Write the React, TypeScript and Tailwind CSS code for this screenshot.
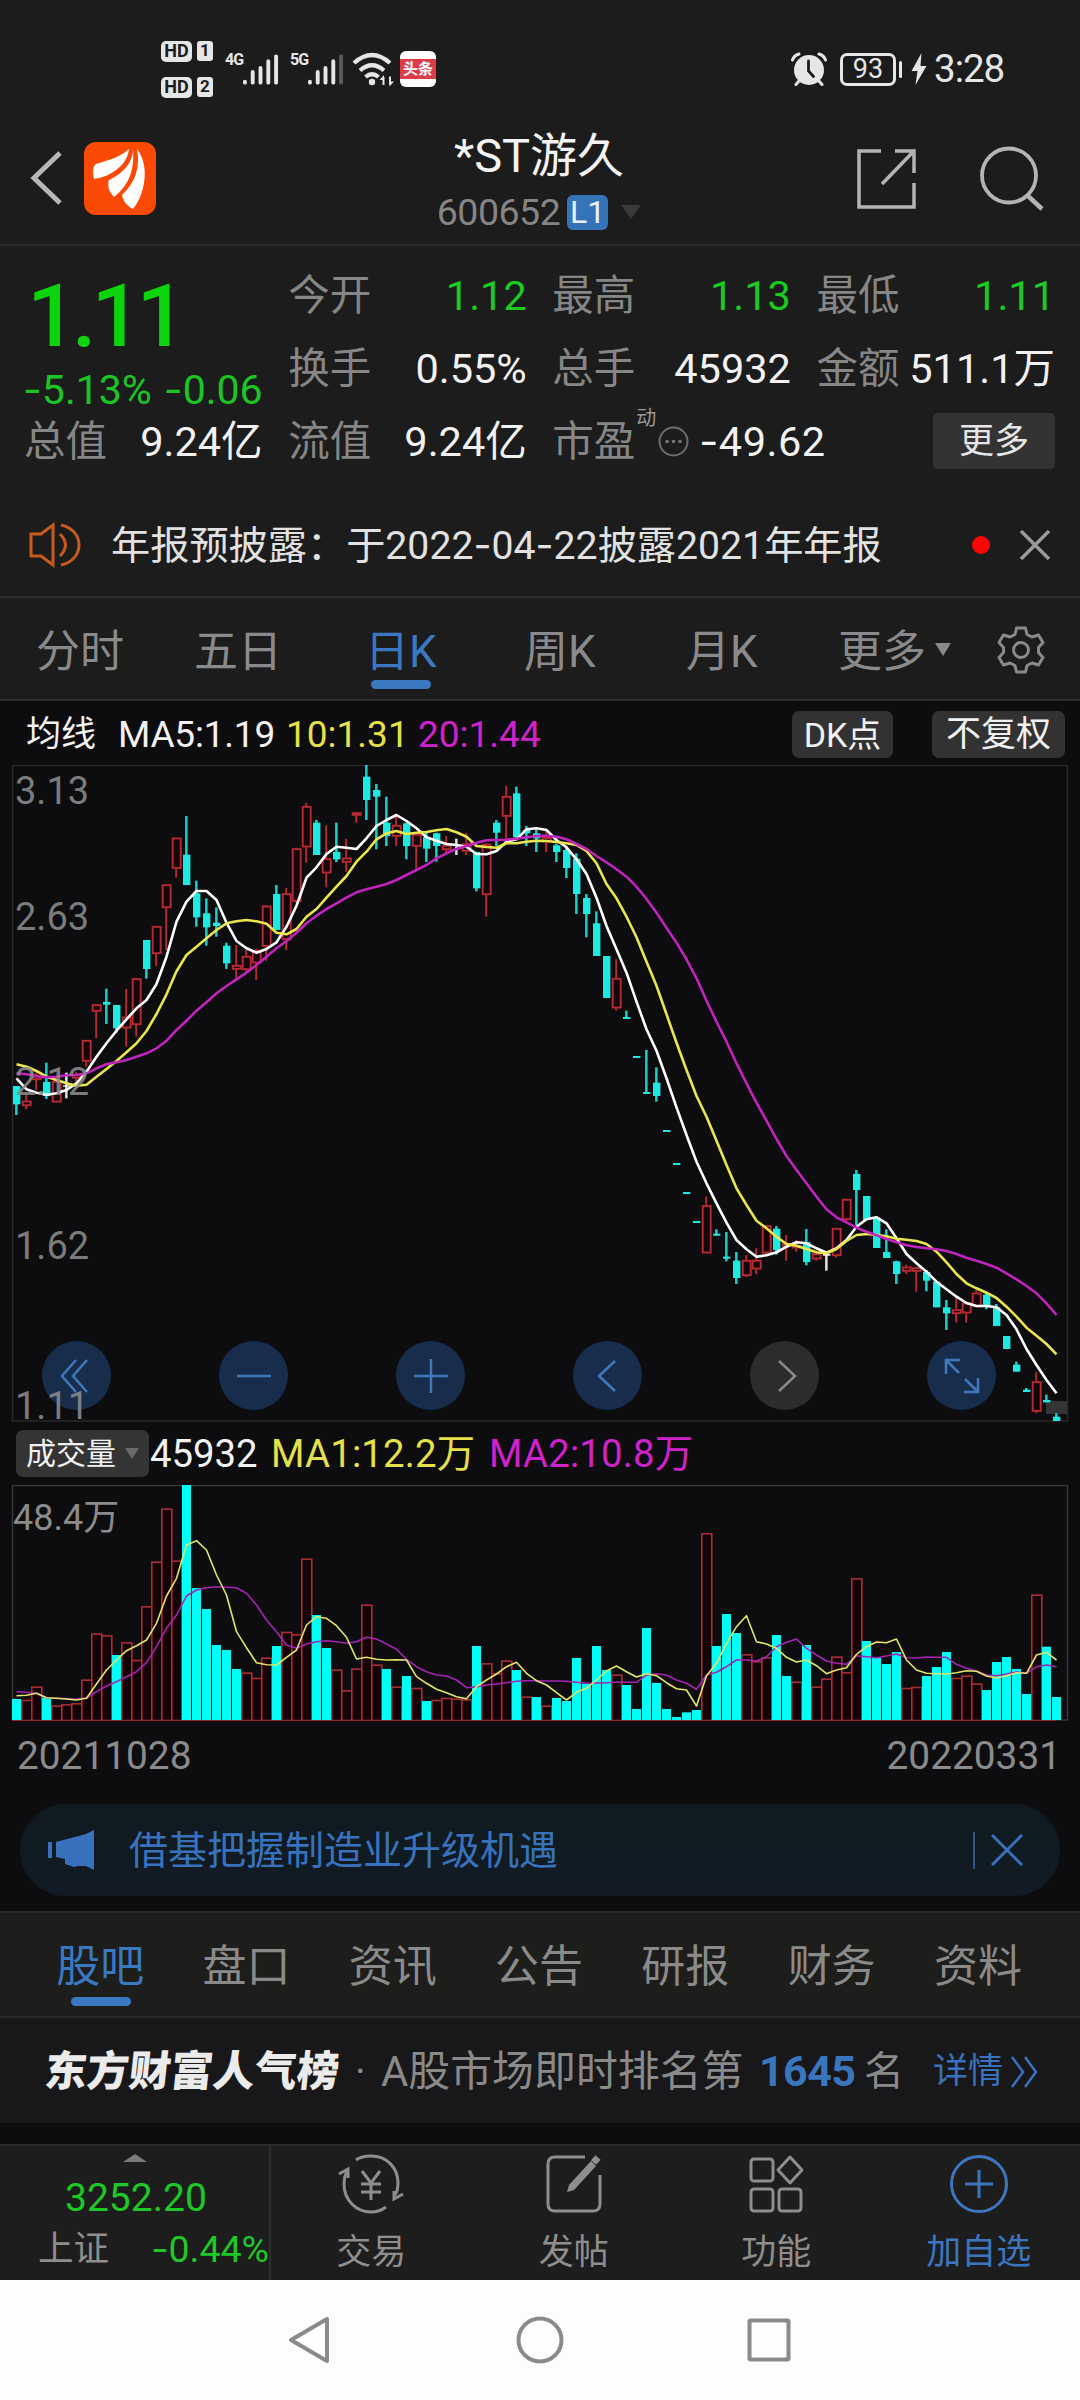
import React from "react";

const FONT = "font-['Roboto','Noto_Sans_CJK_SC',sans-serif]";

type Candle = [kind: "u" | "d" | "x", high: number, top: number, bottom: number, low: number];

/* Vertical chart units are thirds of a pixel; the second half starts lower by LATE units. */
const LATE = 1050;

const CANDLES_EARLY: Candle[] = [
  ["d", 1008, 1008, 1063, 1095], ["u", 1035, 1052, 1068, 1078], ["u", 970, 978, 990, 1020],
  ["d", 938, 996, 1038, 1047], ["u", 990, 993, 1057, 1058], ["x", 968, 1006, 1010, 1045],
  ["u", 965, 972, 985, 1000], ["u", 870, 870, 935, 950], ["u", 763, 763, 785, 865],
  ["d", 716, 756, 764, 822], ["d", 765, 765, 835, 848], ["u", 717, 800, 835, 890],
  ["u", 685, 685, 825, 860], ["d", 570, 570, 657, 686], ["u", 528, 528, 612, 648],
  ["u", 403, 403, 474, 600], ["u", 263, 263, 356, 383], ["d", 198, 314, 405, 405],
  ["d", 392, 430, 502, 530], ["d", 445, 490, 532, 587], ["d", 472, 518, 528, 560],
  ["d", 578, 587, 640, 657], ["u", 585, 645, 659, 686], ["u", 600, 618, 660, 665],
  ["u", 598, 600, 640, 690], ["u", 465, 467, 590, 632], ["d", 405, 432, 540, 540],
  ["u", 413, 430, 570, 600], ["u", 293, 295, 455, 458], ["u", 158, 168, 292, 338],
  ["d", 210, 218, 315, 315], ["u", 226, 325, 370, 412], ["d", 218, 306, 328, 336],
  ["u", 266, 323, 338, 365], ["u", 185, 187, 197, 218], ["d", 45, 80, 150, 210],
  ["d", 102, 120, 140, 298], ["d", 140, 218, 258, 288], ["u", 195, 225, 260, 288],
  ["d", 218, 220, 288, 328], ["u", 250, 252, 290, 362], ["d", 245, 262, 296, 336],
  ["d", 248, 250, 288, 335], ["u", 258, 285, 300, 308], ["x", 266, 284, 288, 315],
  ["u", 248, 280, 305, 315], ["d", 305, 306, 415, 424], ["u", 280, 282, 435, 500],
  ["d", 210, 218, 248, 288], ["u", 108, 138, 200, 275], ["d", 110, 130, 262, 265],
  ["d", 228, 240, 250, 288], ["d", 240, 250, 265, 306], ["u", 235, 262, 276, 306],
  ["d", 282, 286, 306, 336], ["d", 290, 300, 354, 384], ["d", 310, 326, 432, 492],
  ["d", 432, 444, 492, 562], ["d", 484, 520, 618, 618], ["d", 618, 618, 744, 744],
  ["u", 628, 684, 775, 782], ["d", 782, 801, 807, 807], ["d", 918, 918, 924, 924],
  ["d", 900, 1026, 1032, 1032], ["d", 952, 998, 1038, 1055], ["d", 1140, 1140, 1146, 1146],
  ["d", 1239, 1239, 1245, 1245], ["d", 1326, 1326, 1332, 1332], ["d", 1413, 1413, 1419, 1419],
];

const CANDLES_LATE: Candle[] = [
  ["u", 290, 316, 460, 460], ["d", 388, 401, 407, 407], ["d", 396, 470, 476, 484],
  ["d", 456, 482, 534, 552], ["u", 465, 480, 528, 532], ["u", 445, 480, 508, 523],
  ["u", 375, 376, 460, 465], ["d", 378, 386, 450, 464], ["u", 405, 430, 440, 482],
  ["u", 420, 435, 445, 455], ["d", 387, 426, 486, 496], ["u", 455, 460, 478, 482],
  ["x", 455, 462, 467, 512], ["u", 384, 384, 468, 473], ["u", 296, 297, 360, 362],
  ["d", 210, 222, 270, 375], ["d", 288, 288, 360, 360], ["d", 348, 352, 444, 444],
  ["d", 388, 456, 474, 474], ["d", 482, 484, 522, 552], ["u", 494, 500, 515, 522],
  ["u", 500, 502, 515, 575], ["d", 510, 516, 542, 574], ["d", 543, 545, 622, 622],
  ["d", 600, 622, 640, 690], ["u", 590, 628, 642, 668], ["u", 605, 608, 640, 668],
  ["u", 570, 578, 620, 622], ["d", 578, 584, 618, 628], ["d", 612, 622, 678, 678],
  ["d", 708, 708, 747, 747], ["d", 785, 794, 815, 815], ["d", 864, 869, 876, 876],
  ["u", 816, 844, 935, 940], ["d", 884, 900, 907, 907], ["d", 940, 950, 963, 963],
];

const CANDLES: Candle[] = [
  ...CANDLES_EARLY,
  ...CANDLES_LATE.map(([k, a, b, c, d]): Candle => [k, a + LATE, b + LATE, c + LATE, d + LATE]),
];

const late = (values: number[]) => values.map((v) => v + LATE);

const MA5 = [
  985, 1018, 1028, 1034, 1030, 1020, 1000, 965, 920, 880, 842, 808, 775, 750, 702, 620, 515, 455, 423, 423,
  450, 518, 573, 595, 608, 597, 577, 530, 467, 383, 352, 312, 290, 293, 297, 265, 228, 210, 195, 213,
  235, 262, 272, 282, 285, 290, 312, 313, 303, 275, 268, 238, 235, 240, 270, 292, 328, 372, 443, 528,
  598, 668, 755, 838, 902, 985, 1072, 1155, 1235, 1300, 1360, 1418, 1470, 1498,
  ...late([
    470, 466, 457, 440, 427, 430, 445, 458, 445, 420, 380, 358, 352, 370, 415, 462, 490, 515, 545, 568, 590,
    609, 618, 618, 622, 645, 688, 747, 795, 840, 880,
  ]),
];

const MA10 = [
  943, 950, 963, 980, 990, 1000, 1007, 1004, 980, 957, 933, 907, 880, 843, 792, 733, 664, 615, 590, 565,
  540, 520, 514, 510, 514, 521, 548, 553, 537, 500, 477, 443, 410, 378, 335, 305, 268, 250, 243, 252,
  248, 246, 241, 237, 247, 260, 288, 291, 293, 280, 280, 275, 272, 273, 276, 280, 285, 303, 340, 402,
  445, 500, 562, 635, 707, 793, 878, 960, 1038, 1100, 1172, 1245, 1315, 1365,
  ...late([
    362, 385, 410, 432, 437, 447, 457, 460, 447, 423, 405, 402, 405, 409, 416, 419, 423, 432, 455, 487, 522,
    550, 565, 578, 594, 620, 650, 683, 707, 732, 763,
  ]),
];

const MA20 = [
  970, 973, 978, 982, 980, 976, 975, 970, 955, 943, 937, 930, 920, 910, 895, 872, 840, 812, 782, 757,
  730, 708, 688, 668, 645, 620, 595, 573, 548, 520, 497, 477, 460, 443, 427, 418, 410, 402, 390, 375,
  360, 345, 325, 310, 297, 288, 278, 271, 270, 269, 266, 262, 258, 257, 260, 268, 282, 297, 318, 337,
  358, 380, 410, 447, 488, 533, 578, 628, 685, 752, 815, 875, 940, 1000,
  ...late([
    8, 62, 117, 168, 210, 250, 290, 328, 352, 367, 383, 395, 406, 417, 427, 436, 441, 445, 448, 453, 462,
    473, 482, 492, 503, 520, 538, 558, 580, 610, 645,
  ]),
];

/* Positive: hollow red bar, negative: solid cyan bar. */
const VOLUME = [
  -63, 60, 100, -67, 43, 47, 50, 121, 259, 254, -195, 233, 180, 341, 475, 634, 478, -705, -396, -333,
  -225, -210, -153, 142, 126, 187, -222, 264, 257, 484, -315, -216, 151, 89, 154, 346, 166, -153, 100, -132,
  96, -57, 60, 66, 64, 62, -222, 170, 140, 178, -150, 70, -69, 43, -66, -57, -186, -109, -222, -150,
  136, -105, -33, -276, -111, -33, -9, -23, -30, 560, -222, -318, -261, 197, 176, 188, -255, -132, 115, -225,
  100, 124, 190, 143, 425, -237, -187, -168, -204, 96, 99, -132, -159, -204, 126, 133, 109, -90, -174, -189,
  -153, -78, 376, -220, -69,
];

const VOL_MA1 = [
  677, 676, 670, 683, 685, 687, 690, 685, 642, 600, 570, 542, 527, 510, 460, 378, 325, 225, 212, 240,
  315, 375, 485, 533, 578, 584, 585, 562, 540, 465, 440, 445, 467, 502, 567, 562, 568, 570, 569, 570,
  620, 640, 658, 668, 680, 686, 650, 630, 612, 590, 577, 610, 632, 645, 668, 690, 667, 655, 630, 603,
  588, 605, 621, 611, 617, 638, 656, 660, 708, 617, 580, 520, 470, 437, 515, 522, 535, 562, 576, 570,
  587, 611, 600, 593, 553, 530, 516, 518, 507, 570, 600, 610, 611, 612, 608, 602, 604, 618, 624, 617,
  608, 610, 555, 547, 570,
];

const VOL_MA2 = [
  665, 667, 670, 684, 685, 686, 687, 684, 665, 648, 635, 620, 605, 578, 530, 475, 435, 378, 360, 353,
  350, 352, 353, 370, 405, 450, 485, 525, 535, 522, 515, 512, 515, 520, 515, 502, 507, 522, 538, 568,
  590, 605, 615, 618, 630, 653, 650, 645, 642, 638, 634, 632, 632, 633, 633, 634, 637, 640, 639, 638,
  637, 637, 637, 615, 611, 615, 630, 640, 658, 615, 607, 590, 570, 570, 573, 560, 530, 517, 507, 535,
  555, 573, 580, 583, 557, 560, 563, 558, 552, 563, 564, 561, 562, 562, 583, 595, 603, 615, 617, 612,
  606, 610, 590, 585, 590,
];

const cx = (i: number) => 16.5 + 10 * i;
const line = (values: number[]) =>
  values.map((v, i) => `${cx(i)},${(v / 3 - 15).toFixed(1)}`).join(" ");

function Num({ children, className = "" }: { children: string; className?: string }) {
  return (
    <span className={`whitespace-nowrap ${className}`}>
      {children.split("").map((c, i) =>
        c === "-" ? <span key={i} className="font-['Inter']">-</span> : <React.Fragment key={i}>{c}</React.Fragment>,
      )}
    </span>
  );
}

function HdBadge({ n }: { n: string }) {
  return (
    <div className="flex gap-[5px] text-[#1c1c1c] font-bold leading-none">
      <span className="flex h-[21px] w-[31px] items-center justify-center rounded-[5px] bg-[#e6e6e6] text-[18px]">HD</span>
      <span className="flex h-[20px] w-[16px] items-center justify-center rounded-[3px] bg-[#e6e6e6] text-[17px]">{n}</span>
    </div>
  );
}

function Signal({ label, dimLast }: { label: string; dimLast?: boolean }) {
  return (
    <div className="flex h-[34px] w-[54px] text-[#e6e6e6]">
      <span className="w-[17px] whitespace-nowrap text-[16px] font-bold leading-[16px] tracking-[-1px]">{label}</span>
      <svg width="38" height="34" viewBox="0 0 38 34" stroke="currentColor" strokeWidth="4" strokeLinecap="round">
        <path d="M3 30v1M11 20v11M19 16v15M27 9v22" />
        <path d="M35 4v27" stroke={dimLast ? "#5a5a5a" : "currentColor"} />
      </svg>
    </div>
  );
}

function StatusBar() {
  return (
    <div className="flex h-[112px] items-center pl-[161px] pt-[27px] text-[#e6e6e6]">
      <div className="flex w-[64px] flex-col gap-[15px]">
        <HdBadge n="1" />
        <HdBadge n="2" />
      </div>
      <Signal label="4G" />
      <div className="w-[11px]" />
      <Signal label="5G" dimLast />
      <svg className="ml-[8px]" width="42" height="35" viewBox="0 0 42 35" fill="none" stroke="#e6e6e6" strokeWidth="4.2">
        <path d="M2 11Q20 -5 38 11" />
        <path d="M8 18.500Q20 8 32 18.500" />
        <path d="M13.500 25Q20 19.500 26.500 25" />
        <circle cx="20" cy="30" r="3.200" fill="#e6e6e6" stroke="none" />
        <path d="M31.500 33v-8M38 24.500v8" strokeWidth="2" />
        <path d="M27.500 28l4.500-5v5zM42 29.500l-4.500 5v-5z" fill="#e6e6e6" stroke="none" />
      </svg>
      <div className="ml-[6px] flex h-[36px] w-[36px] items-center rounded-[6px] bg-white">
        <span className="flex h-[20px] w-full items-center justify-center bg-[#dd3c48] text-[15px] font-bold leading-none text-white">头条</span>
      </div>
      <svg className="ml-[355px]" width="36" height="34" viewBox="0 0 36 34">
        <circle cx="18" cy="18" r="15" fill="#e6e6e6" />
        <path d="M1.500 8Q3 3.500 8 2M34.500 8Q33 3.500 28 2M8 29l-3 3.500M28 29l3 3.500" stroke="#e6e6e6" strokeWidth="3" strokeLinecap="round" fill="none" />
        <path d="M17.500 9v10l5 5.500" stroke="#1c1c1c" strokeWidth="2.800" strokeLinecap="round" fill="none" />
      </svg>
      <div className="ml-[13px] flex h-[33px] w-[56px] items-center justify-center rounded-[7px] border-[3px] border-[#e6e6e6] text-[27px] leading-none">93</div>
      <div className="ml-[3px] h-[17px] w-[3px] rounded bg-[#e6e6e6]" />
      <svg className="ml-[9px]" width="16" height="32" viewBox="0 0 16 32">
        <path d="M10.500 0L0.500 18h6L4.500 32L15.500 13h-6z" fill="#e6e6e6" />
      </svg>
      <span className="ml-[7px] text-[38.500px] leading-none tracking-[-1px]">3:28</span>
    </div>
  );
}

function Header() {
  return (
    <div className="flex h-[134px] items-start border-b-2 border-[#2b2b2b]">
      <svg className="ml-[29px] mt-[39px]" width="34" height="54" viewBox="0 0 34 54" fill="none" stroke="#b8b8b8" strokeWidth="5">
        <path d="M31 2L5 27L31 52" />
      </svg>
      <div className="ml-[21px] mt-[30px] h-[73px] w-[72px] overflow-hidden rounded-[12px] bg-[#fb4a05]">
        <svg width="72" height="73" viewBox="0 0 72 73" fill="#fff">
          <path d="M45 7C37 15 22 19 12 22C8 25 9 31 10 37C16 36 19 35 24 33C36 27 44 18 45 7Z" />
          <path d="M49 7C49 20 40 31 25 38C23 44 25 50 30 55C43 45 51 30 49 7Z" />
          <path d="M53 7C57 28 49 43 38 53C39 59 43 64 49 67C60 54 67 25 53 7Z" />
        </svg>
      </div>
      <div className="ml-[233px] flex w-[300px] flex-col items-center">
        <span className="mt-[20px] whitespace-nowrap text-[47px] leading-none text-[#f4f4f4]">*ST游久</span>
        <div className="mt-[16px] flex h-[35px] items-center">
          <span className="text-[37.500px] leading-none tracking-[-0.5px] text-[#858585]">600652</span>
          <span className="ml-[7px] flex h-[35px] w-[41px] items-center justify-center rounded-[6px] bg-[#3573b9] text-[32px] leading-none text-[#e8f0fa]">L1</span>
          <svg className="ml-[13px]" width="20" height="14" viewBox="0 0 20 14"><path d="M0 0h20L10 14z" fill="#3a3a3a" /></svg>
        </div>
      </div>
      <svg className="ml-[168px] mt-[37px]" width="60" height="60" viewBox="0 0 60 60" fill="none" stroke="#b4b4b4" strokeWidth="3.500">
        <path d="M24 2H2v56h55V34M38 2h19v22M56 3L25 35" />
      </svg>
      <svg className="ml-[62px] mt-[34px]" width="66" height="66" viewBox="0 0 66 66" fill="none" stroke="#b4b4b4" strokeWidth="3.800">
        <circle cx="30" cy="29.500" r="27" />
        <path d="M48 49l15 14" strokeWidth="4.500" />
      </svg>
    </div>
  );
}

function Cell({ label, value, green }: { label: string; value: string; green?: boolean }) {
  return (
    <div className="flex h-[73px] items-center justify-between text-[41.500px] leading-none">
      <span className="-ml-[1px] whitespace-nowrap text-[#868686]">{label}</span>
      <Num className={green ? "text-[#1bcb22]" : "text-[#f2f2f2]"}>{value}</Num>
    </div>
  );
}

function Quote() {
  return (
    <div className="grid h-[254px] grid-cols-4 content-start gap-x-[26.500px] px-[25px] pt-[13px]">
      <div className="row-span-2 flex flex-col">
        <span className="flex h-[115px] items-center pl-[2px] text-[88px] font-medium leading-none tracking-[-5px] text-[#0cd40c]">1.11</span>
        <div className="flex justify-between text-[41px] leading-[30px] text-[#1bc524]">
          <Num className="ml-[-2px]">-5.13%</Num>
          <Num>-0.06</Num>
        </div>
      </div>
      <Cell label="今开" value="1.12" green />
      <Cell label="最高" value="1.13" green />
      <Cell label="最低" value="1.11" green />
      <Cell label="换手" value="0.55%" />
      <Cell label="总手" value="45932" />
      <Cell label="金额" value="511.1万" />
      <Cell label="总值" value="9.24亿" />
      <Cell label="流值" value="9.24亿" />
      <div className="col-span-2 flex h-[73px] items-center text-[41.500px] leading-none">
        <span className="-ml-[1px] text-[#868686]">市盈</span>
        <span className="mb-[46px] ml-[1px] text-[20px] text-[#9a9a9a]">动</span>
        <svg className="ml-[2px]" width="31" height="31" viewBox="0 0 31 31" fill="#777">
          <circle cx="15.500" cy="15.500" r="14" fill="none" stroke="#6c6c6c" strokeWidth="2" />
          <circle cx="9" cy="15.500" r="1.800" /><circle cx="15.500" cy="15.500" r="1.800" /><circle cx="22" cy="15.500" r="1.800" />
        </svg>
        <Num className="ml-[10px] tracking-[0.5px] text-[#f2f2f2]">-49.62</Num>
        <span className="ml-auto flex h-[56px] w-[122px] items-center justify-center rounded-[5px] bg-[#333334] text-[35px] text-[#e6e6e6]">更多</span>
      </div>
    </div>
  );
}

function Notice() {
  return (
    <div className="flex h-[98px] items-center border-b-2 border-[#2d2d2d] pl-[29px] pb-[5px]">
      <svg width="53" height="46" viewBox="0 0 53 46" fill="none" stroke="#c75a1c" strokeWidth="3">
        <path d="M2 12h10L24 3v40L12 34H2z" />
        <path d="M31 12Q42 23 31 34" />
        <path d="M32 3C56 8 56 38 32 43" />
      </svg>
      <Num className="ml-[29px] mt-[2px] w-[861px] text-[39.200px] leading-none text-[#e2e2e2]">年报预披露：于2022-04-22披露2021年年报</Num>
      <div className="h-[18px] w-[18px] rounded-full bg-[#fb0505]" />
      <svg className="ml-[29px]" width="32" height="30" viewBox="0 0 32 30" stroke="#9a9a9a" strokeWidth="3.500"><path d="M2 1l28 28M30 1L2 29" /></svg>
    </div>
  );
}

function PeriodTabs() {
  return (
    <div className="flex h-[104px] items-center border-b-2 border-[#2d2d2d] pl-[36px] pt-[8px] text-[44px] leading-none text-[#8a8a8c]">
      <span className="w-[158px]">分时</span>
      <span className="w-[171px]">五日</span>
      <div className="relative w-[159px] text-[#3b78c2]">
        日K
        <div className="absolute -bottom-[15px] left-[6px] h-[9px] w-[60px] rounded-full bg-[#3b78c2]" />
      </div>
      <span className="w-[162px]">周K</span>
      <span className="w-[152px]">月K</span>
      <span className="whitespace-nowrap">更多</span>
      <svg className="-mt-[5px] ml-[9px]" width="16" height="13" viewBox="0 0 16 13"><path d="M0 0h16L8 13z" fill="#8a8a8c" /></svg>
      <svg className="-mt-[5px] ml-[45px]" width="50" height="50" viewBox="0 0 50 50" fill="none" stroke="#8a8a8c" strokeWidth="3" strokeLinejoin="round">
        <path d="M20.500 3h9l1.500 6.500l5 2.500l6.500-2l4.500 7.500l-4.500 5v5l4.500 5l-4.500 7.500l-6.500-2l-5 2.500L29.500 47h-9L19 40.500L14 38l-6.500 2L3 32.500l4.500-5v-5L3 17.500L7.500 10l6.500 2l5-2.500z" />
        <circle cx="25" cy="25" r="7.500" />
      </svg>
    </div>
  );
}

function MaRow() {
  return (
    <div className="flex h-[64px] items-center whitespace-nowrap pl-[26px] pt-[1px] text-[37px] leading-none text-[#f2f2f2]">
      <span className="w-[92px] text-[35px]">均线</span>
      <span className="w-[168px] tracking-[-0.2px]">MA5:1.19</span>
      <span className="w-[132px] text-[#e6e04a]">10:1.31</span>
      <span className="text-[#cf22ca]">20:1.44</span>
      <span className="ml-auto flex h-[47px] w-[101px] items-center justify-center rounded-[7px] bg-[#323233] text-[34px]">DK点</span>
      <span className="ml-[39px] mr-[15px] flex h-[47px] w-[133px] items-center justify-center rounded-[7px] bg-[#323233] text-[35px]">不复权</span>
    </div>
  );
}

const CANDLE_COLORS = { u: "#b82a31", d: "#1feae2", x: "#ffffff" };

function CandleShape({ c, i }: { c: Candle; i: number }) {
  const [kind, ...raw] = c;
  const [high, top, bottom, low] = raw.map((v) => v / 3 - 15);
  const color = CANDLE_COLORS[kind];
  const x = cx(i);
  if (kind === "u") {
    return (
      <g stroke={color} strokeWidth="1.900" fill="#14060a">
        <path d={`M${x - 0.3} ${high}V${top}M${x - 0.3} ${bottom}V${low}`} />
        <rect x={x - 3.8} y={top + 0.8} width="8" height={Math.max(bottom - top - 1.6, 1.5)} />
      </g>
    );
  }
  return (
    <g fill={color}>
      <rect x={x - 1.4} y={high} width="2.500" height={low - high} opacity="0.880" />
      <rect x={x - 3.5} y={top} width="7.400" height={bottom - top} />
    </g>
  );
}

function RoundButton({ children, gray }: { children: React.ReactNode; gray?: boolean }) {
  return (
    <div className={gray ? "flex h-[69px] w-[69px] items-center justify-center rounded-full bg-[#2c2b2d]" : "flex h-[69px] w-[69px] items-center justify-center rounded-full bg-[#172d4b]"}>
      <svg width="36" height="36" viewBox="0 0 36 36" fill="none" stroke={gray ? "#8a8a8a" : "#4078bd"} strokeWidth="2.500">{children}</svg>
    </div>
  );
}

function PriceChart() {
  return (
    <div className="relative h-[657px]">
      <svg className="block" width="1080" height="657" viewBox="0 0 1080 657">
        <rect x="12.500" y="0.500" width="1055" height="655.500" fill="none" stroke="#28282a" strokeWidth="1.500" />
      </svg>
      <div className="absolute bottom-[12px] left-[42px] flex gap-[108px]">
        <RoundButton><path d="M17 2L3 18l14 16M28 2L14 18l14 16" /></RoundButton>
        <RoundButton><path d="M1 18h34" /></RoundButton>
        <RoundButton><path d="M1 18h34M18 1v34" /></RoundButton>
        <RoundButton><path d="M25 3L9 18l16 15" /></RoundButton>
        <RoundButton gray><path d="M12 3l16 15l-16 15" /></RoundButton>
        <RoundButton><path d="M2 16V2h14M3 3l12 12M34 20v14H20M33 33L21 21" /></RoundButton>
      </div>
      <svg className="absolute left-0 top-0 overflow-visible" width="1080" height="657" viewBox="0 0 1080 657">
        <rect x="1046" y="636" width="21" height="13" fill="#343435" />
        {CANDLES.map((c, i) => <CandleShape key={i} c={c} i={i} />)}
        <g fill="none" strokeWidth="2.600" strokeLinejoin="round">
          <polyline points={line(MA5)} stroke="#ffffff" />
          <polyline points={line(MA10)} stroke="#eae74e" />
          <polyline points={line(MA20)} stroke="#c024bc" />
        </g>
      </svg>
      <div className="absolute left-[15px] top-0 text-[38px] leading-[38px] text-[#8b8b8b]/90">
        <div className="mt-[7px]">3.13</div>
        <div className="mt-[88px]">2.63</div>
        <div className="mt-[127px]">2.12</div>
        <div className="mt-[126px]">1.62</div>
        <div className="mt-[122px]">1.11</div>
      </div>
    </div>
  );
}

function VolumeHeader() {
  return (
    <div className="flex h-[63px] items-center whitespace-nowrap pl-[16px] text-[38.300px] leading-none">
      <div className="flex h-[47px] w-[133px] items-center rounded-[7px] bg-[#343435] pl-[10px] text-[30px] text-[#f2f2f2]">
        成交量
        <svg className="ml-[9px]" width="14" height="11" viewBox="0 0 14 11"><path d="M0 0h14L7 11z" fill="#6a6a6a" /></svg>
      </div>
      <span className="w-[122px] pl-[1px] text-[#f2f2f2]">45932</span>
      <span className="w-[218px] tracking-[0.2px] text-[#e6e04a]">MA1:12.2万</span>
      <span className="tracking-[0.2px] text-[#cf22ca]">MA2:10.8万</span>
    </div>
  );
}

function VolumeChart() {
  return (
    <div className="relative h-[236px]">
      <svg className="block" width="1080" height="236" viewBox="0 0 1080 236">
        <rect x="12.500" y="0.500" width="1055" height="234.500" fill="none" stroke="#3c3c3e" strokeWidth="1.300" />
        {VOLUME.map((v, i) => {
          const h = Math.abs(v) / 3;
          return v < 0 ? (
            <rect key={i} x={cx(i) - 4.5} y={235 - h} width="9" height={h} fill="#00fff6" />
          ) : (
            <rect key={i} x={cx(i) - 4.700} y={235.5 - h} width="10" height={h} fill="#150206" stroke="#a82e32" strokeWidth="1.600" />
          );
        })}
        <path d="M12 235.500H1056" stroke="#8a2a2e" strokeWidth="1" />
        <g fill="none" strokeWidth="1.600" strokeLinejoin="round">
          <polyline points={line(VOL_MA2)} stroke="#a524b4" />
          <polyline points={line(VOL_MA1)} stroke="#e2e66a" />
        </g>
      </svg>
      <span className="absolute left-[13px] top-[15px] text-[36px] leading-none text-[#8b8b8b]">48.4万</span>
    </div>
  );
}

function PromoBanner() {
  return (
    <div className="mx-[20px] flex h-[92px] items-center rounded-full bg-gradient-to-b from-[#0f1a1f] to-[#121b25] pl-[28px] text-[#3872bd]">
      <svg width="46" height="40" viewBox="0 0 46 40" fill="currentColor">
        <path d="M0 12h4v16H0zM8 12L38 4L46 0v40L38 36L30 36L26 37L17 34V29L8 27z" />
      </svg>
      <span className="ml-[35px] mt-[2px] w-[844px] text-[39px] leading-none">借基把握制造业升级机遇</span>
      <div className="h-[37px] w-[2px] bg-[#2c5688]" />
      <svg className="ml-[16px]" width="32" height="32" viewBox="0 0 32 32" stroke="currentColor" strokeWidth="3"><path d="M1 1l30 30M31 1L1 31" /></svg>
    </div>
  );
}

const SECTIONS = ["股吧", "盘口", "资讯", "公告", "研报", "财务", "资料"];

function SectionTabs() {
  return (
    <div className="flex h-[107px] items-center border-b-2 border-t-2 border-[#292929] bg-[#1d1d1c] pl-[27px] pt-[5px] text-[44px] leading-none text-[#8a8a8a]">
      {SECTIONS.map((s, i) => (
        <div key={s} className={i === 0 ? "relative w-[146.300px] text-center text-[#3b78c2]" : "w-[146.300px] text-center"}>
          {s}
          {i === 0 && <div className="absolute -bottom-[17px] left-[44px] h-[9px] w-[60px] rounded-full bg-[#3b78c2]" />}
        </div>
      ))}
    </div>
  );
}

function Popularity() {
  return (
    <div className="flex h-[105px] items-center whitespace-nowrap bg-[#18181a] pl-[45px] pt-[2px] text-[41px] leading-none text-[#8a8a8a]">
      <span className="w-[301px] -skew-x-6 text-[42px] font-black text-[#ebebeb]">东方财富人气榜</span>
      <span className="w-[35px] pl-[9px]">·</span>
      <span className="w-[378px] text-[41.900px]">A股市场即时排名第</span>
      <span className="w-[105px] text-[43px] font-bold tracking-[-0.6px] text-[#3a76bd]">1645</span>
      <span className="w-[69px] text-[40px]">名</span>
      <span className="text-[35px] text-[#3872bd]">详情</span>
      <svg className="ml-[7px]" width="30" height="32" viewBox="0 0 30 32" fill="none" stroke="#3872bd" strokeWidth="2.500"><path d="M2 1l11 15L2 31M15 1l11 15L15 31" /></svg>
    </div>
  );
}

function BarItem({ label, blue, children }: { label: string; blue?: boolean; children: React.ReactNode }) {
  return (
    <div className={blue ? "flex flex-1 flex-col items-center text-[#3b76be]" : "flex flex-1 flex-col items-center text-[#8e8e8e]"}>
      <svg className="mt-[7px]" width="66" height="62" viewBox="0 0 66 62" fill="none" stroke="currentColor" strokeWidth="3">{children}</svg>
      <span className="mt-[20px] text-[35px] leading-none">{label}</span>
    </div>
  );
}

function BottomBar() {
  return (
    <div className="flex h-[136px] border-t-2 border-[#2b2b2b] bg-[#1d1d1e]">
      <div className="flex w-[271px] flex-col border-r-2 border-[#2e2e2e] leading-none text-[#1ec827]">
        <svg className="ml-[123px] mt-[8px] shrink-0" width="24" height="8" viewBox="0 0 24 8"><path d="M12 0l12 8H0z" fill="#7a7a7a" /></svg>
        <span className="ml-[65px] mt-[17px] text-[39px]">3252.20</span>
        <div className="mt-[12px] flex items-center justify-between whitespace-nowrap pl-[38px]">
          <span className="text-[35.500px] text-[#8e8e8e]">上证</span>
          <Num className="text-[37.500px]">-0.44%</Num>
        </div>
      </div>
      <div className="-ml-[1px] flex flex-1">
        <BarItem label="交易">
          <path d="M18 7C22 4 27 3 33 3C49 3 60 15 60 30C60 35 59 39 57 42M48 54C44 57 39 59 33 59C18 59 6 47 6 31C6 26 7 22 9 18" />
          <path d="M1 21l9-5v9M65 41l-9 5v-8" />
          <path d="M24 18l9 12l9-12M33 30v17M23 31h20M23 39h20" />
        </BarItem>
        <BarItem label="发帖">
          <path d="M44 4H14Q7 4 7 11V51Q7 58 14 58H52Q59 58 59 51V22" />
          <path d="M26 39L28 32L50 8L55 13L33 37z" fill="currentColor" stroke="none" />
          <path d="M52.500 9.500L57 4.500" strokeWidth="7" />
        </BarItem>
        <BarItem label="功能">
          <rect x="8" y="6" width="22" height="22" rx="3" />
          <rect x="8" y="36" width="22" height="22" rx="3" />
          <rect x="36" y="36" width="22" height="22" rx="3" />
          <path d="M47 4l12 13l-12 13l-12-13z" strokeLinejoin="round" />
        </BarItem>
        <BarItem label="加自选" blue>
          <circle cx="33" cy="31" r="27.500" />
          <path d="M33 17v28M19 31h28" />
        </BarItem>
      </div>
    </div>
  );
}

function SystemNav() {
  return (
    <div className="flex h-[120px] items-center bg-[#fdfdfe] pl-[287px]">
      <svg width="505" height="50" viewBox="0 0 505 50" fill="none" stroke="#8a8a8c" strokeWidth="4" strokeLinejoin="round">
        <path d="M4 25L40 4v42z" />
        <circle cx="253" cy="25" r="21.500" />
        <rect x="462.500" y="5.500" width="39" height="39" rx="1" />
      </svg>
    </div>
  );
}

export default function App() {
  return (
    <div className={`${FONT} flex h-[2400px] w-[1080px] flex-col overflow-hidden bg-[#1c1c1d]`}>
      <StatusBar />
      <Header />
      <Quote />
      <Notice />
      <PeriodTabs />
      <div className="bg-[#0d0d0f] pt-[1px]">
        <MaRow />
        <div className="-mt-[1px]"><PriceChart /></div>
        <VolumeHeader />
        <VolumeChart />
        <div className="flex h-[83px] justify-between px-[17px] pt-[16px] text-[38.800px] leading-none text-[#8b8b8b]">
          <span>20211028</span>
          <span className="pr-[2px]">20220331</span>
        </div>
        <PromoBanner />
        <div className="h-[15px]" />
      </div>
      <SectionTabs />
      <Popularity />
      <div className="h-[21px] bg-[#0d0d0f]" />
      <BottomBar />
      <SystemNav />
    </div>
  );
}
